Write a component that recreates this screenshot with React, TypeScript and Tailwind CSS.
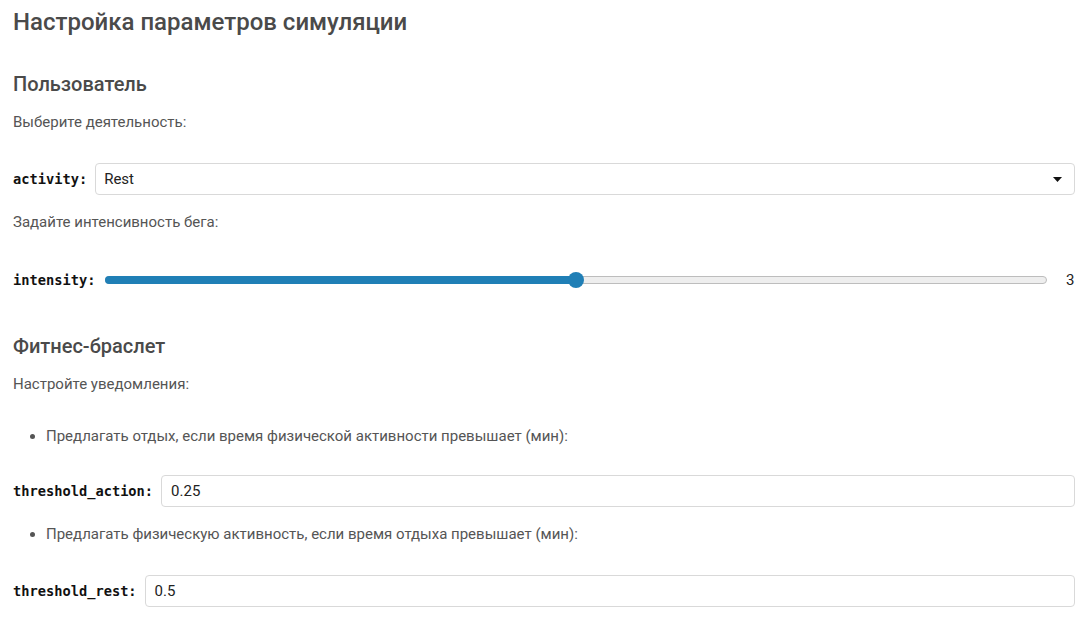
import React from "react";

const mono = { fontFamily: '"DejaVu Sans Mono", "Liberation Mono", monospace' };

function Label({ text }: { text: string }) {
  return (
    <span
      className="shrink-0 text-[13.7px] font-bold text-[#111] mr-[8px]"
      style={mono}
    >
      {text}
    </span>
  );
}

function TextBox({ value }: { value: string }) {
  return (
    <div className="flex-1 h-[32px] border border-[#d9d9d9] rounded-[4px] bg-white flex items-center px-[9px] text-[15px] text-[#222]">
      {value}
    </div>
  );
}

export default function App() {
  return (
    <div
      className="w-[1087px] h-[621px] bg-white overflow-hidden pl-[13px] pr-[12px] text-[#555]"
      style={{ fontFamily: 'Roboto, "Noto Sans", sans-serif' }}
    >
      {/* Title */}
      <h1 className="text-[24px] font-medium text-[#4a4a4a] leading-[28px] pt-[8px]">
        Настройка параметров симуляции
      </h1>

      {/* User */}
      <h2 className="text-[20px] font-medium text-[#4a4a4a] leading-[26px] mt-[35px]">
        Пользователь
      </h2>
      <p className="text-[15px] leading-[20px] mt-[15px]">Выберите деятельность:</p>

      <div className="flex items-center mt-[31px]">
        <Label text="activity:" />
        <div className="flex-1 h-[32px] border border-[#d9d9d9] rounded-[4px] bg-white flex items-center justify-between pl-[8px] pr-[12px] text-[15px] text-[#222]">
          <span>Rest</span>
          <svg width="9" height="5" viewBox="0 0 9 5">
            <path d="M0 0 L9 0 L4.5 5 Z" fill="#111" />
          </svg>
        </div>
      </div>

      <p className="text-[15px] leading-[20px] mt-[17px]">Задайте интенсивность бега:</p>

      <div className="flex items-center mt-[38px] h-[20px]">
        <Label text="intensity:" />
        <div className="flex-1 relative h-[16px] flex items-center ml-[2px] mr-[19px]">
          <div className="w-full h-[8px] rounded-full bg-[#eeeeee] border border-[#bdbdbd]" />
          <div className="absolute left-0 w-1/2 h-[8px] rounded-full bg-[#207fb6]" />
          <div className="absolute left-1/2 -translate-x-1/2 w-[16px] h-[16px] rounded-full bg-[#207fb6]" />
        </div>
        <span className="text-[15px] text-[#222] w-[9px]">3</span>
      </div>

      {/* Fitness band */}
      <h2 className="text-[20px] font-medium text-[#4a4a4a] leading-[26px] mt-[43px]">
        Фитнес-браслет
      </h2>
      <p className="text-[15px] leading-[20px] mt-[15px]">Настройте уведомления:</p>

      <ul className="list-disc pl-[33px] mt-[32px] text-[15px] leading-[20px]">
        <li>Предлагать отдых, если время физической активности превышает (мин):</li>
      </ul>
      <div className="flex items-center mt-[29px]">
        <Label text="threshold_action:" />
        <TextBox value="0.25" />
      </div>

      <ul className="list-disc pl-[33px] mt-[17px] text-[15px] leading-[20px]">
        <li>Предлагать физическую активность, если время отдыха превышает (мин):</li>
      </ul>
      <div className="flex items-center mt-[31px]">
        <Label text="threshold_rest:" />
        <TextBox value="0.5" />
      </div>
    </div>
  );
}
